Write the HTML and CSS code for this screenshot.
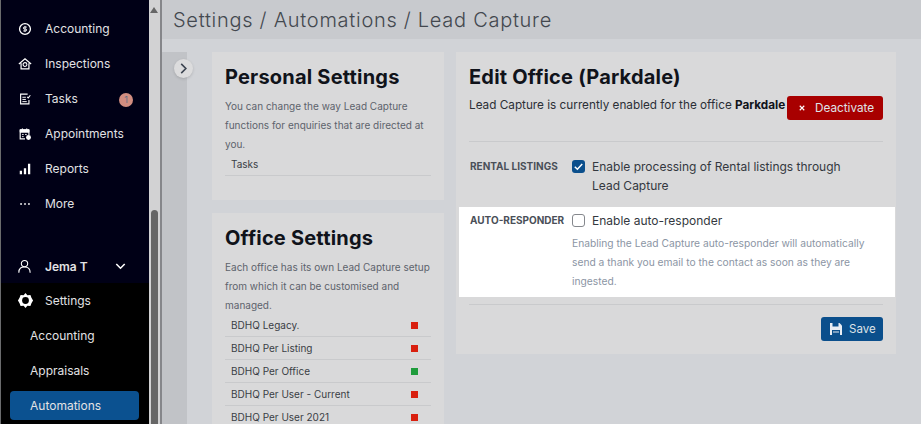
FILE: index.html
```html
<!DOCTYPE html>
<html lang="en">
<head>
  <meta charset="UTF-8">
  <title>Lead Capture</title>
  <link rel="stylesheet" href="styles.css">
</head>
<body>
  <div class="app">
    <aside class="sidebar">
      <nav class="nav-main">
        <a class="nav-item"><svg class="nav-icon" viewBox="0 0 16 16"><circle cx="8" cy="8" r="6.2" fill="none" stroke="#fff" stroke-width="1.5"/><path d="M10 5.8H7.2a1.1 1.1 0 0 0 0 2.2h1.6a1.1 1.1 0 0 1 0 2.2H6M8 4.5v7" fill="none" stroke="#fff" stroke-width="1.1"/></svg>Accounting</a>
        <a class="nav-item"><svg class="nav-icon" viewBox="0 0 16 16"><path d="M1 8 8 2l7 6M3.5 7v6.5h9V7" fill="none" stroke="#fff" stroke-width="1.4"/><circle cx="8" cy="8.6" r="2.2" fill="none" stroke="#fff" stroke-width="1.2"/></svg>Inspections</a>
        <a class="nav-item"><svg class="nav-icon" viewBox="0 0 16 16"><path d="M11 2.5H3v11h9.5V9" fill="none" stroke="#fff" stroke-width="1.3"/><path d="M5 6h4M5 8.5h4M5 11h5" stroke="#fff" stroke-width="1.1"/><path d="m10.5 5.5 1.2 1.2 2.4-3" fill="none" stroke="#fff" stroke-width="1.2"/></svg>Tasks<span class="nav-badge">1</span></a>
        <a class="nav-item"><svg class="nav-icon" viewBox="0 0 16 16"><path d="M8 13.5H2.5v-10h10V9" fill="none" stroke="#fff" stroke-width="1.3"/><path d="M2.5 3h10v3h-10zM5 1.5v2M10 1.5v2M4.5 8.5h2M8 8.5h2M4.5 11h2" fill="#fff" stroke="#fff" stroke-width="1"/><circle cx="12" cy="12" r="2.8" fill="#fff"/></svg>Appointments</a>
        <a class="nav-item"><svg class="nav-icon" viewBox="0 0 16 16"><path d="M2 10h2.6v4H2zM6.7 7h2.6v7H6.7zM11.4 2H14v12h-2.6z" fill="#fff"/></svg>Reports</a>
        <a class="nav-item"><svg class="nav-icon" viewBox="0 0 16 16"><path d="M2.5 7.2h2v1.6h-2zM7 7.2h2v1.6H7zM11.5 7.2h2v1.6h-2z" fill="#fff"/></svg>More</a>
        <div class="user-row">
          <svg class="user-icon" viewBox="0 0 18 18"><circle cx="9" cy="5.5" r="3.8" fill="none" stroke="#fff" stroke-width="1.3"/><path d="M2.2 16.5c0-6 3.2-6.8 6.8-6.8s6.8.8 6.8 6.8" fill="none" stroke="#fff" stroke-width="1.3"/></svg>
          <span class="user-name">Jema T</span>
          <svg class="user-caret" viewBox="0 0 12 8"><path d="M1.2 1.2 6 6l4.8-4.8" fill="none" stroke="#fff" stroke-width="1.8"/></svg>
        </div>
      </nav>
      <div class="settings-nav">
        <a class="settings-head"><svg class="gear" viewBox="0 0 18 18"><path d="M9 1 11 3.5l3.2-.4 1.1 3L17 9l-1.700 2.900-1.100 3-3.200-.4L9 17l-2-2.500-3.200.4-1.100-3L1 9l1.700-2.900 1.100-3 3.200.4z" fill="#fff"/><circle cx="9" cy="9" r="3.6" fill="#000"/></svg>Settings</a>
        <a class="settings-link">Accounting</a>
        <a class="settings-link">Appraisals</a>
        <a class="settings-link is-active">Automations</a>
      </div>
    </aside>
    <div class="side-scroll">
      <span class="scroll-arrow"></span>
      <span class="scroll-thumb"></span>
    </div>
    <main class="main">
      <header class="page-title">Settings / Automations / Lead Capture</header>
      <div class="page-body">
        <div class="rail"><button class="rail-toggle"><svg viewBox="0 0 10 14"><path d="M2 2l5 5-5 5" fill="none" stroke="#3c4450" stroke-width="1.7"/></svg></button></div>
        <div class="col-left">
          <section class="card card-personal">
            <h2>Personal Settings</h2>
            <p class="card-text">You can change the way Lead Capture functions for enquiries that are directed at you.</p>
            <ul class="list">
              <li>Tasks</li>
            </ul>
          </section>
          <section class="card card-office">
            <h2>Office Settings</h2>
            <p class="card-text">Each office has its own Lead Capture setup from which it can be customised and managed.</p>
            <ul class="list">
              <li>BDHQ Legacy.<span class="dot dot-red"></span></li>
              <li>BDHQ Per Listing<span class="dot dot-red"></span></li>
              <li>BDHQ Per Office<span class="dot dot-green"></span></li>
              <li>BDHQ Per User - Current<span class="dot dot-red"></span></li>
              <li>BDHQ Per User 2021<span class="dot dot-red"></span></li>
            </ul>
          </section>
        </div>
        <section class="card card-edit">
          <h2>Edit Office (Parkdale)</h2>
          <div class="status-row">
            <p>Lead Capture is currently enabled for the office <b>Parkdale</b></p>
            <button class="btn btn-red"><svg viewBox="0 0 8 8"><path d="M1 1l6 6M7 1 1 7" stroke="#fff" stroke-width="1.5"/></svg>Deactivate</button>
          </div>
          <hr class="rule rule-top">
          <div class="field">
            <div class="field-label">RENTAL LISTINGS</div>
            <span class="check is-on"><svg viewBox="0 0 14 14"><path d="m3 7.2 2.8 2.8L11 4.3" fill="none" stroke="#fff" stroke-width="1.6"/></svg></span>
            <div class="field-text">Enable processing of Rental listings through Lead Capture</div>
          </div>
          <div class="field field-focus">
            <div class="field-label">AUTO-RESPONDER</div>
            <span class="check"></span>
            <div class="field-text">Enable auto-responder</div>
            <p class="field-help">Enabling the Lead Capture auto-responder will automatically send a thank you email to the contact as soon as they are ingested.</p>
          </div>
          <hr class="rule rule-bottom">
          <div class="actions">
            <button class="btn btn-blue"><svg viewBox="0 0 14 14"><path d="M1 1h9.5L13 3.500V13H1z" fill="#e8edf3"/><path d="M3.5 1h6v3.5h-6z" fill="#0b4f8c"/><path d="M3 8h8v5H3z" fill="#0b4f8c"/><path d="M4 9.5h6v1H4z" fill="#e8edf3"/></svg>Save</button>
          </div>
        </section>
      </div>
    </main>
  </div>
</body>
</html>
```

FILE: styles.css
```css
:root {
  --color-navy: #000016;
  --color-blue: #0b4f8c;
  --color-card: #d9d9da;
  --color-page: #d1d3d7;
  --color-rule: #c9cacc;
  --color-muted: #5d636c;
}

* {
  box-sizing: border-box;
  margin: 0;
  padding: 0;
}

html, body {
  height: 424px;
  overflow: hidden;
}

body {
  font-family: Inter, "Noto Sans", sans-serif;
  color: #21252b;
  background-color: var(--color-page);
}

.app {
  display: flex;
  height: 424px;
  overflow: hidden;
}

/* sidebar */
.sidebar {
  width: 149px;
  flex-shrink: 0;
  display: flex;
  flex-direction: column;
  background-color: #000;
  border-left: 1px solid #6a6b6d;
  color: #e2e2e4;
  font-size: 12px;
}

.nav-main {
  height: 283px;
  flex-shrink: 0;
  padding-top: 11px;
  background-color: var(--color-navy);
}

.nav-item {
  display: flex;
  align-items: center;
  height: 35px;
  padding-left: 17px;
  position: relative;
}

.nav-icon {
  width: 14px;
  height: 14px;
  margin-right: 13px;
}

.nav-badge {
  position: absolute;
  left: 118px;
  top: 12px;
  width: 14px;
  height: 14px;
  border-radius: 50%;
  background-color: #d18d80;
  color: #5c6e86;
  font-size: 9px;
  line-height: 14px;
  text-align: center;
}

.user-row {
  display: flex;
  align-items: center;
  height: 30px;
  margin-top: 30px;
  padding-left: 16px;
}

.user-icon {
  width: 15px;
  height: 15px;
  margin-right: 13px;
}

.user-name {
  font-weight: 600;
  width: 70px;
}

.user-caret {
  width: 11px;
  height: 7px;
}

.settings-nav {
  flex: 1;
}

.settings-head {
  display: flex;
  align-items: center;
  height: 35px;
  margin-bottom: 3px;
  padding-left: 16px;
}

.gear {
  width: 17px;
  height: 17px;
  margin-right: 11px;
}

.settings-link {
  display: flex;
  align-items: center;
  height: 29px;
  margin: 0 10px 6px 9px;
  padding-left: 20px;
  border-radius: 4px;
}

.is-active {
  background-color: #0b5190;
}

.side-scroll {
  width: 13px;
  flex-shrink: 0;
  background-color: #d2d2d3;
  border-right: 2px solid #85868a;
  position: relative;
}

.scroll-arrow {
  position: absolute;
  left: 1px;
  top: 7px;
  border-left: 4px solid transparent;
  border-right: 4px solid transparent;
  border-bottom: 6px solid #666;
}

.scroll-thumb {
  position: absolute;
  left: 2px;
  top: 210px;
  bottom: 0;
  width: 7px;
  border-radius: 4px 4px 0 0;
  background-color: #666;
}

/* main area */
.main {
  flex: 1;
  min-width: 0;
}

.page-title {
  height: 39px;
  padding: 8px 0 0 11px;
  background-color: #c8cace;
  color: #43484f;
  font-size: 20px;
  font-weight: 300;
  letter-spacing: 0.72px;
}

.page-body {
  display: flex;
  align-items: flex-start;
  padding-top: 13px;
}

.rail {
  width: 25px;
  height: 372px;
  flex-shrink: 0;
  background-color: #c1c3c7;
  position: relative;
}

.rail-toggle {
  position: absolute;
  left: 12px;
  top: 7px;
  width: 19px;
  height: 19px;
  display: flex;
  align-items: center;
  justify-content: center;
  border: none;
  border-radius: 50%;
  background-color: #dcdcdd;
  box-shadow: 0 1px 3px rgba(0, 0, 0, 0.15);
}

.rail-toggle svg {
  width: 10px;
  height: 13px;
}

.col-left {
  width: 232px;
  margin-left: 25px;
  display: flex;
  flex-direction: column;
  gap: 13px;
}

.card {
  background-color: var(--color-card);
  padding: 13px;
}

.card h2 {
  font-size: 20px;
  line-height: 24px;
  font-weight: 700;
  letter-spacing: 0.2px;
  color: #10131a;
}

.card-text {
  margin-top: 8px;
  font-size: 10px;
  line-height: 19px;
  color: var(--color-muted);
}

.list {
  list-style: none;
  margin-top: -1px;
  font-size: 10px;
  color: #3a3e45;
}

.list li {
  display: flex;
  align-items: center;
  justify-content: space-between;
  height: 23px;
  padding: 0 13px 0 6px;
  border-bottom: 1px solid var(--color-rule);
}

.card-personal {
  height: 148px;
}

.card-office {
  height: 211px;
}

.dot {
  width: 7px;
  height: 7px;
}

.dot-red {
  background-color: #d9200f;
}

.dot-green {
  background-color: #1f9c3c;
}

.card-edit {
  width: 440px;
  margin-left: 12px;
  height: 302px;
}

.status-row {
  display: flex;
  align-items: flex-start;
  justify-content: space-between;
  margin-top: 7px;
  font-size: 11.75px;
}

.status-row p {
  line-height: 18px;
  color: #2b2f36;
}

.status-row b {
  color: #10131a;
}

.btn {
  display: inline-flex;
  align-items: center;
  height: 24px;
  border: none;
  border-radius: 3px;
  color: #dfe3e8;
  font-family: inherit;
  font-size: 11.75px;
}

.btn-red {
  width: 96px;
  padding-left: 12px;
  background-color: #a80000;
}

.btn-red svg {
  width: 6px;
  height: 6px;
  margin-right: 10px;
}

.btn-blue {
  width: 62px;
  padding-left: 8px;
  font-size: 11.5px;
  background-color: var(--color-blue);
}

.btn-blue svg {
  width: 14px;
  height: 14px;
  margin-right: 6px;
}

.rule {
  border: none;
  border-top: 1px solid var(--color-rule);
}

.rule-top {
  margin: 21px 0 15px;
}

.rule-bottom {
  margin-top: 7px;
}

.field {
  display: grid;
  grid-template-columns: 103px 20px 1fr;
  align-items: start;
  font-size: 12px;
}

.field-label {
  padding-left: 1px;
  font-size: 10px;
  font-weight: 700;
  line-height: 19px;
  color: #4a4f58;
}

.check {
  width: 13px;
  height: 13px;
  margin-top: 3px;
  border: 1px solid #85888d;
  border-radius: 3px;
  background-color: #fff;
  display: block;
}

.check.is-on {
  border: none;
  background-color: var(--color-blue);
}

.check svg {
  display: block;
  width: 13px;
  height: 13px;
}

.field-text {
  line-height: 19px;
  padding-right: 30px;
  color: #343840;
}

.field-focus {
  margin: 12px -12px 0 -10px;
  padding: 4px 2px 6px 10px;
  background-color: #fff;
}

.field-help {
  grid-column: 2 / 4;
  margin-top: 4px;
  padding-right: 20px;
  font-size: 10.25px;
  line-height: 19px;
  color: #8b95a4;
}

.actions {
  display: flex;
  justify-content: flex-end;
  margin-top: 12px;
}
```
